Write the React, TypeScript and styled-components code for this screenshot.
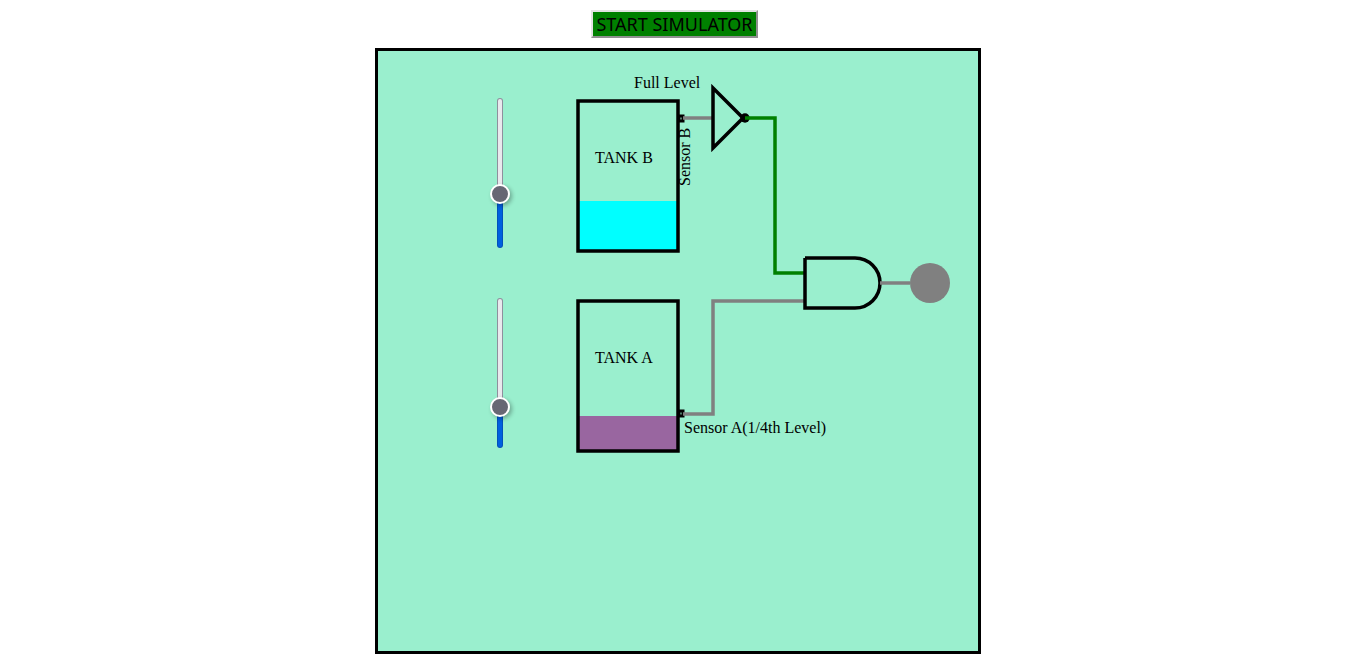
import { useState } from "react";
import styled, { createGlobalStyle } from "styled-components";

const CAPACITY = 150;

const GlobalStyle = createGlobalStyle`
  body {
    margin: 0;
    background: #fff;
  }
`;

const Page = styled.main`
  display: flex;
  flex-direction: column;
  align-items: center;
  gap: 10px;
  padding-top: 10px;
`;

const StartButton = styled.button`
  height: 28px;
  padding: 0 3px;
  border: 2px outset #e3e3e3;
  background: #008000;
  color: #000;
  font: 18px/24px "Noto Sans", sans-serif;
`;

const BoardArea = styled.div`
  box-sizing: border-box;
  display: flex;
  justify-content: center;
  width: 100%;
  padding-left: 7px;
`;

const Board = styled.section`
  display: flex;
  align-items: flex-start;
  flex: 0 1 600px;
  min-width: 0;
  border: 3px solid #000;
  background: #9aefce;
`;

const Controls = styled.div`
  display: flex;
  flex-direction: column;
  gap: 50px;
  padding: 47px 38px 0 112px;
`;

const LevelSlider = styled.input.attrs({ type: "range" })`
  appearance: none;
  writing-mode: vertical-lr;
  direction: rtl;
  display: block;
  width: 20px;
  height: 150px;
  margin: 0;
  background: transparent;

  &::-webkit-slider-runnable-track {
    box-sizing: border-box;
    width: 6px;
    height: 150px;
    border: 1px solid transparent;
    border-radius: 3px;
    background:
      linear-gradient(to top, #0060df var(--fill), #e9e9ed var(--fill)) padding-box,
      linear-gradient(to top, #0250bb var(--fill), #8f8f9d var(--fill)) border-box;
  }

  &::-webkit-slider-thumb {
    appearance: none;
    box-sizing: border-box;
    width: 20px;
    height: 20px;
    margin-left: -8px;
    border: 2px solid #fff;
    border-radius: 50%;
    background: #676774;
    box-shadow: 2px 2px 4px rgba(0, 0, 0, 0.3);
  }
`;

const Diagram = styled.svg`
  display: block;
  flex: 1 1 430px;
  min-width: 0;
  height: auto;
`;

const Label = styled.text`
  fill: #000;
  font: 16px "Liberation Serif", serif;
`;

const Outline = styled.path`
  fill: none;
  stroke: #000;
  stroke-width: 3.5;
`;

const SensorBox = styled.path`
  fill: none;
  stroke: #000;
  stroke-width: 3;
`;

const Wire = styled.path<{ $live?: boolean }>`
  fill: none;
  stroke: ${(p) => (p.$live ? "#008000" : "#808080")};
  stroke-width: 3.5;
`;

type LevelProps = { name: string; value: number; onChange: (value: number) => void };

function Level({ name, value, onChange }: LevelProps) {
  return (
    <LevelSlider
      aria-label={name}
      min={0}
      max={CAPACITY}
      value={value}
      onChange={(e) => onChange(Number(e.target.value))}
      style={{ "--fill": `${(value / CAPACITY) * 100}%` } as React.CSSProperties}
    />
  );
}

type TankProps = { name: string; top: number; level: number; color: string; sensorY: number };

function Tank({ name, top, level, color, sensorY }: TankProps) {
  return (
    <g>
      <rect x="200" y={top + CAPACITY - level} width="99" height={level} fill={color} />
      <Outline d={`M200 ${top}h100v${CAPACITY}h-100z`} />
      <SensorBox d={`M301 ${sensorY - 2}h4v5h-4z`} />
      <Label x="217" y={top + 62}>{name}</Label>
    </g>
  );
}

export default function App() {
  const [tankB, setTankB] = useState(50);
  const [tankA, setTankA] = useState(35);
  const [running, setRunning] = useState(false);
  const notB = tankB < 133;
  const sensorA = tankA >= 38;
  const lampOn = running && notB && sensorA;

  return (
    <>
      <GlobalStyle />
      <Page>
        <StartButton type="button" onClick={() => setRunning(true)}>START SIMULATOR</StartButton>
        <BoardArea>
          <Board>
            <Controls>
              <Level name="Tank B level" value={tankB} onChange={setTankB} />
              <Level name="Tank A level" value={tankA} onChange={setTankA} />
            </Controls>
            <Diagram viewBox="170 0 430 600">
              <Tank name="TANK B" top={50} level={tankB} color="#00ffff" sensorY={67} />
              <Tank name="TANK A" top={250} level={tankA} color="#9966a0" sensorY={362} />
              <Label x="256" y="37">Full Level</Label>
              <Label transform="translate(312 135) rotate(-90)">Sensor B</Label>
              <Label x="306" y="382">Sensor A(1/4th Level)</Label>
              <Wire $live={!notB} d="M305 67H335" />
              <Outline d="M335 37L365 67L335 97z" />
              <circle cx="367" cy="67" r="4.7" />
              <Wire $live={notB} d="M367 67H397V222H427" />
              <Wire $live={sensorA} d="M305 363H335V250H427" />
              <Outline d="M427 207H477A25 25 0 0 1 477 257H427V207" />
              <Wire $live={lampOn} d="M502 232H532" />
              <circle cx="552" cy="232" r="20" fill={lampOn ? "#ff0000" : "#808080"} />
            </Diagram>
          </Board>
        </BoardArea>
      </Page>
    </>
  );
}
